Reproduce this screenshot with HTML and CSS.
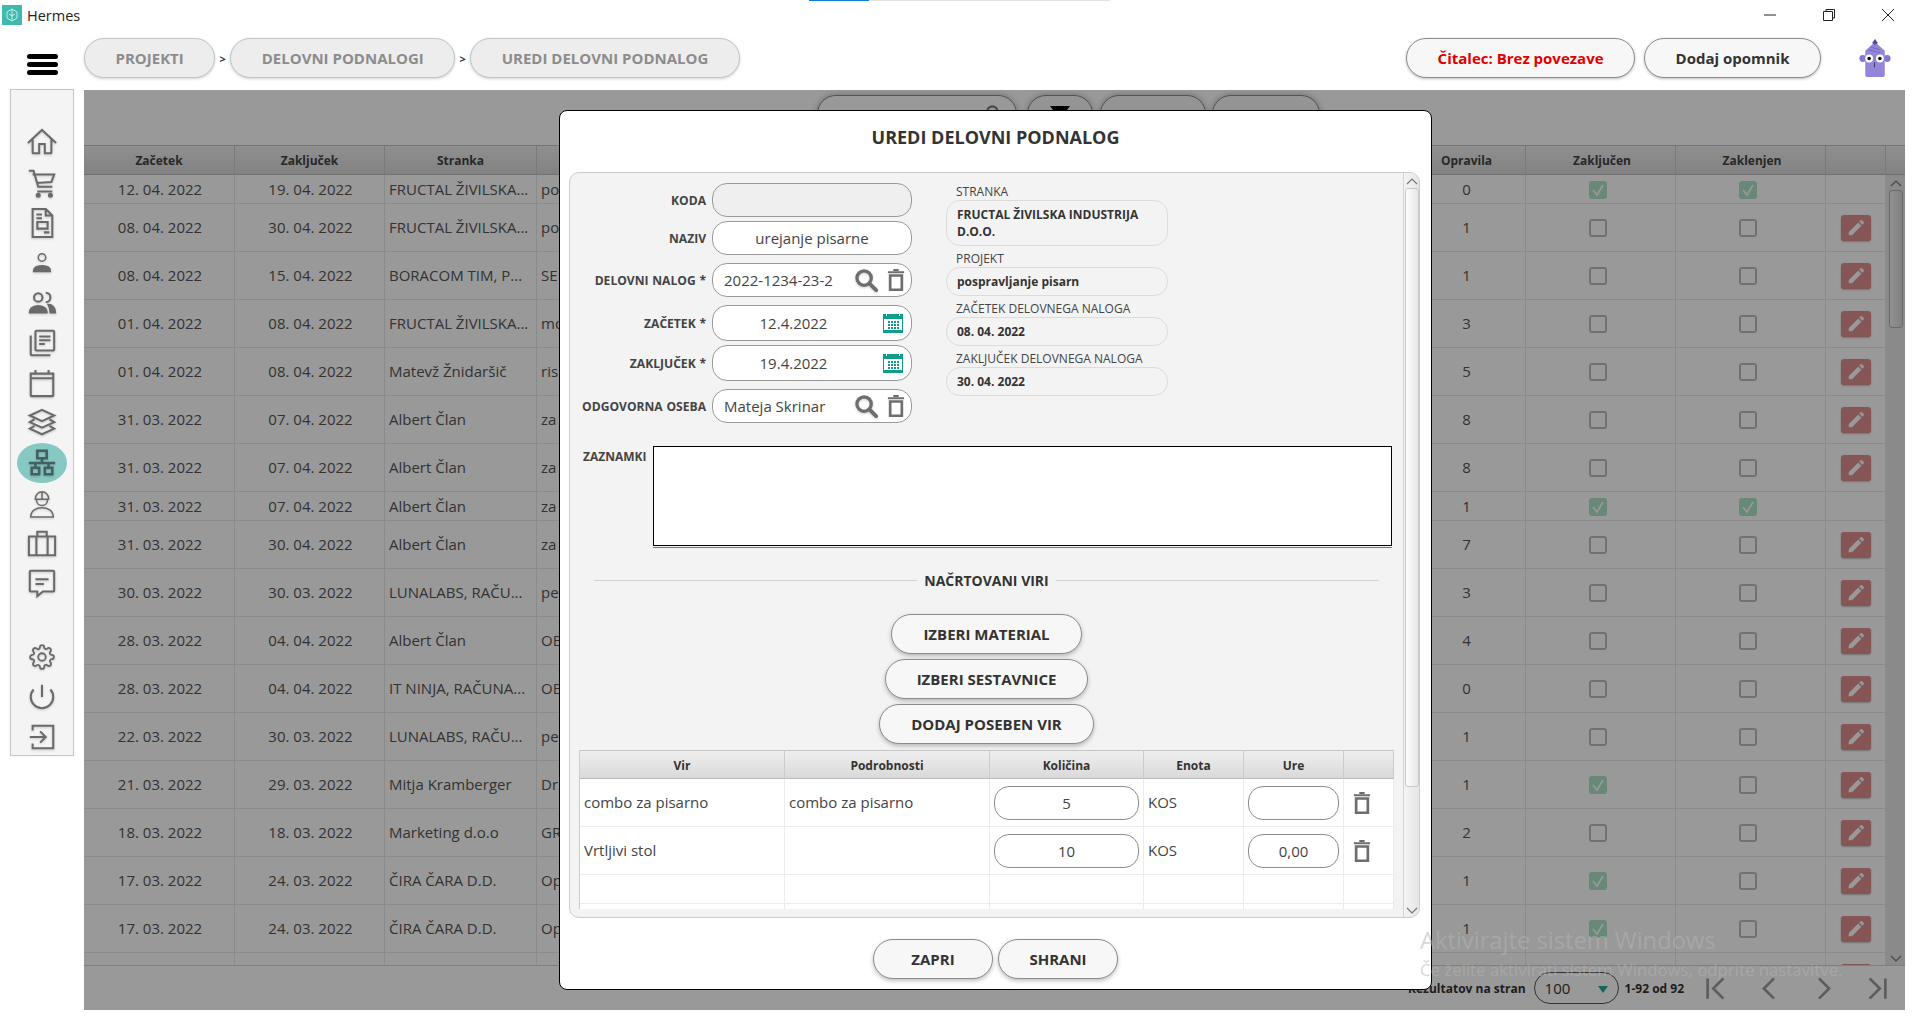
FILE: index.html
```html
<!DOCTYPE html>
<html lang="sl">
<head>
<meta charset="utf-8">
<title>Hermes</title>
<link rel="stylesheet" href="styles.css">
</head>
<body>
<svg class="sprite" aria-hidden="true">
  <symbol id="i-search" viewBox="0 0 24 24"><circle cx="9.5" cy="9.5" r="7.5" fill="none" stroke="currentColor" stroke-width="3.4"/><path d="M15 15l7 7" stroke="currentColor" stroke-width="4" stroke-linecap="round"/></symbol>
  <symbol id="i-trash" viewBox="0 0 20 24"><path d="M1 3.5h18M7 1h6" stroke="currentColor" stroke-width="2.2" fill="none"/><path d="M3.5 7h13v16h-13z" stroke="currentColor" stroke-width="3" fill="none"/></symbol>
  <symbol id="i-cal" viewBox="0 0 20 20"><path fill="currentColor" d="M0 1h3v2h1V1h12v2h1V1h3v19H0z"/><path fill="#fff" d="M1 6h18v13H1z"/><path fill="currentColor" d="M5 8h2v2H5zM8 8h2v2H8zM11 8h2v2h-2zM14 8h2v2h-2zM5 11h2v2H5zM8 11h2v2H8zM11 11h2v2h-2zM14 11h2v2h-2zM5 14h2v2H5zM8 14h2v2H8zM11 14h2v2h-2zM14 14h2v2h-2zM0 17h20v3H0z"/></symbol>
  <symbol id="i-pen" viewBox="0 0 20 20"><path fill="currentColor" d="M2 14.5L12.5 4l3.5 3.5L5.5 18H2zM13.6 2.9l1.3-1.3a1.4 1.4 0 0 1 2 0l1.5 1.5a1.4 1.4 0 0 1 0 2l-1.3 1.3z"/></symbol>
  <symbol id="i-up" viewBox="0 0 12 8"><path d="M1 7l5-5 5 5" fill="none" stroke="currentColor" stroke-width="1.2"/></symbol>
  <symbol id="i-down" viewBox="0 0 12 8"><path d="M1 1l5 5 5-5" fill="none" stroke="currentColor" stroke-width="1.2"/></symbol>
</svg>

<header class="titlebar">
  <svg class="app-icon" viewBox="0 0 20 20"><rect width="20" height="20" fill="#3fb9ae"/><path d="M5 7l5-3 5 3v6l-5 3-5-3zM10 4v12M7 9l3 2 3-2" fill="none" stroke="#d8f3f0" stroke-width=".9"/></svg>
  <span class="app-name">Hermes</span>
  <div class="loadbar"><span class="loadbar-fill"></span></div>
  <div class="winctl">
    <svg class="win-btn" viewBox="0 0 14 14"><path d="M1 7h12" stroke="#222" stroke-width="1"/></svg>
    <svg class="win-btn" viewBox="0 0 14 14"><path d="M1.5 3.5h9v9h-9zM4 3.5V1.5h8.5V10h-2" fill="none" stroke="#222" stroke-width="1"/></svg>
    <svg class="win-btn" viewBox="0 0 14 14"><path d="M1 1l12 12M13 1L1 13" stroke="#222" stroke-width="1"/></svg>
  </div>
</header>

<div class="topbar">
  <div class="burger"><span></span><span></span><span></span></div>
  <nav class="crumbs">
    <a class="crumb">PROJEKTI</a><span class="crumb-sep">&gt;</span>
    <a class="crumb">DELOVNI PODNALOGI</a><span class="crumb-sep">&gt;</span>
    <a class="crumb">UREDI DELOVNI PODNALOG</a>
  </nav>
  <div class="top-actions">
    <a class="top-btn top-btn-alert">Čitalec: Brez povezave</a>
    <a class="top-btn">Dodaj opomnik</a>
    <svg class="mascot" viewBox="0 0 32 40">
      <circle cx="3.5" cy="20" r="3.5" fill="#8677cf"/><circle cx="28.5" cy="20" r="3.5" fill="#8677cf"/>
      <path d="M6 12L16 3l10 9v25a2 2 0 0 1-2 2H8a2 2 0 0 1-2-2z" fill="#9385d8"/>
      <path d="M13 4l3-4 3 4-3 2z" fill="#5a4a9c"/>
      <path d="M9 11l12 3M11 8l10 3" stroke="#7668bd" stroke-width="1" fill="none"/>
      <circle cx="10" cy="20" r="4" fill="#fff"/><circle cx="21" cy="20" r="4" fill="#fff"/>
      <circle cx="10" cy="20" r="1.8" fill="#111"/><circle cx="21" cy="20" r="1.8" fill="#111"/>
      <path d="M15.500 24v5" stroke="#3c3270" stroke-width="1"/>
    </svg>
  </div>
</div>

<div class="workspace">
  <aside class="sidebar">
    <a class="nav-item"><svg class="nav-ic" viewBox="0 0 32 32"><path d="M1 16L16 2l15 14M6 12v14a1 1 0 0 0 1 1h6V17h6v10h6a1 1 0 0 0 1-1V12"/></svg></a>
    <a class="nav-item"><svg class="nav-ic" viewBox="0 0 32 32"><path d="M2 3h5l5 17h15M6 7h23l-3 8-16 1M11 25h16"/><circle class="dot" cx="12" cy="29" r="1.6"/><circle class="dot" cx="25" cy="29" r="1.6"/></svg></a>
    <a class="nav-item"><svg class="nav-ic" viewBox="0 0 32 32"><path d="M6 1h14l7 7v23H6zM20 1v7h7M10 7h6M10 11h6M11 15h11v7H11zM18 26h6"/></svg></a>
    <a class="nav-item"><svg class="nav-ic nav-ic-thin" viewBox="0 0 32 32"><circle cx="16" cy="10" r="4"/><path class="solid" d="M7 25c0-4 4-6 9-6s9 2 9 6z"/></svg></a>
    <a class="nav-item"><svg class="nav-ic" viewBox="0 0 32 32"><circle cx="12" cy="10" r="4.500"/><path d="M20 5a5 5 0 0 1 0 10"/><path class="solid" d="M3 26c0-9 18-9 18 0z"/><path class="solid" d="M23 18c4 0 7 3 7 8h-5c0-3-1-6-2-8z"/></svg></a>
    <a class="nav-item"><svg class="nav-ic" viewBox="0 0 32 32"><path d="M9 4a1 1 0 0 1 1-1h18a1 1 0 0 1 1 1v19a1 1 0 0 1-1 1H10a1 1 0 0 1-1-1zM4 8v20a1 1 0 0 0 1 1h20M13 9h12M13 13h12M13 17h6"/></svg></a>
    <a class="nav-item"><svg class="nav-ic" viewBox="0 0 32 32"><path d="M4 6h24v23a1 1 0 0 1-1 1H5a1 1 0 0 1-1-1zM4 11h24M9 2v5M23 2v5"/></svg></a>
    <a class="nav-item"><svg class="nav-ic" viewBox="0 0 32 32"><path d="M16 2l13 6-13 6L3 8zM8 12l-5 3 13 6 13-6-5-3M8 19l-5 3 13 6 13-6-5-3"/></svg></a>
    <a class="nav-item nav-item-active"><svg class="nav-ic" viewBox="0 0 32 32"><path d="M11 3h10v8H11zM16 11v5M2 16h28M9 16v5M23 16v5M5 21h8v7H5zM19 21h8v7h-8z"/></svg></a>
    <a class="nav-item"><svg class="nav-ic nav-ic-thin" viewBox="0 0 32 32"><path d="M9 11a7 7 0 0 1 14 0v1H9zM16 4v8M10 12c0 9 12 9 12 0M4 31c0-7 6-10 12-10s12 3 12 10z"/></svg></a>
    <a class="nav-item"><svg class="nav-ic" viewBox="0 0 32 32"><path d="M2 9h28v20H2zM11 9V4h10v5M10 9v20M22 9v20"/></svg></a>
    <a class="nav-item"><svg class="nav-ic" viewBox="0 0 32 32"><path d="M3 4a1 1 0 0 1 1-1h24a1 1 0 0 1 1 1v20a1 1 0 0 1-1 1H17l-6 5v-5H4a1 1 0 0 1-1-1zM9 12h14M9 17h9"/></svg></a>
    <a class="nav-item nav-item-gap"><svg class="nav-ic nav-ic-gear" viewBox="0 0 24 24"><circle cx="12" cy="12" r="3.500"/><path d="M19.400 15a1.650 1.650 0 0 0 .33 1.820l.06.06a2 2 0 0 1 0 2.830 2 2 0 0 1-2.830 0l-.06-.06a1.650 1.650 0 0 0-1.820-.33 1.650 1.650 0 0 0-1 1.510V21a2 2 0 0 1-2 2 2 2 0 0 1-2-2v-.09A1.650 1.650 0 0 0 9 19.400a1.650 1.650 0 0 0-1.820.33l-.06.06a2 2 0 0 1-2.830 0 2 2 0 0 1 0-2.830l.06-.06a1.650 1.650 0 0 0 .33-1.820 1.650 1.650 0 0 0-1.510-1H3a2 2 0 0 1-2-2 2 2 0 0 1 2-2h.09A1.650 1.650 0 0 0 4.600 9a1.650 1.650 0 0 0-.33-1.820l-.06-.06a2 2 0 0 1 0-2.830 2 2 0 0 1 2.830 0l.06.06a1.650 1.650 0 0 0 1.820.33H9a1.650 1.650 0 0 0 1-1.510V3a2 2 0 0 1 2-2 2 2 0 0 1 2 2v.09a1.650 1.650 0 0 0 1 1.510 1.650 1.650 0 0 0 1.820-.33l.06-.06a2 2 0 0 1 2.830 0 2 2 0 0 1 0 2.830l-.06.06a1.650 1.650 0 0 0-.33 1.820V9a1.650 1.650 0 0 0 1.510 1H21a2 2 0 0 1 2 2 2 2 0 0 1-2 2h-.09a1.650 1.650 0 0 0-1.510 1z"/></svg></a>
    <a class="nav-item"><svg class="nav-ic" viewBox="0 0 32 32"><path d="M7 8a12 12 0 1 0 18 0M16 3v13"/></svg></a>
    <a class="nav-item"><svg class="nav-ic" viewBox="0 0 32 32"><path d="M6 9V4h22v24H6v-5M3 16h16M14 10l6 6-6 6"/></svg></a>
  </aside>

  <main class="content">
    <div class="toolbar">
      <div class="tool tool-search"><svg class="tool-search-ic"><use href="#i-search"/></svg></div>
      <div class="tool tool-filter"><svg class="tool-funnel" viewBox="0 0 20 20"><path d="M0 0h20l-7 9v9l-6-3V9z"/></svg></div>
      <div class="tool tool-a"></div>
      <div class="tool tool-b"></div>
    </div>
    <div class="grid-area">
      <div class="grid-clip">
        <table class="grid">
          <colgroup><col class="w-start"><col class="w-end"><col class="w-client"><col class="w-name"><col class="w-tasks"><col class="w-flag"><col class="w-flag"><col class="w-edit"></colgroup>
          <thead><tr><th>Začetek</th><th>Zaključek</th><th>Stranka</th><th></th><th>Opravila</th><th class="th-flag">Zaključen</th><th class="th-flag">Zaklenjen</th><th></th></tr></thead>
          <tbody>
            <tr class="row-s"><td class="c">12. 04. 2022</td><td class="c">19. 04. 2022</td><td>FRUCTAL ŽIVILSKA...</td><td>po</td><td class="c">0</td><td class="c"><span class="cb cb-on"><svg viewBox="0 0 18 18"><path d="M4 9l4 5 6-10"/></svg></span></td><td class="c"><span class="cb cb-on"><svg viewBox="0 0 18 18"><path d="M4 9l4 5 6-10"/></svg></span></td><td></td></tr>
            <tr><td class="c">08. 04. 2022</td><td class="c">30. 04. 2022</td><td>FRUCTAL ŽIVILSKA...</td><td>po</td><td class="c">1</td><td class="c"><span class="cb"></span></td><td class="c"><span class="cb"></span></td><td class="c"><a class="edit"><svg><use href="#i-pen"/></svg></a></td></tr>
            <tr><td class="c">08. 04. 2022</td><td class="c">15. 04. 2022</td><td>BORACOM TIM, P...</td><td>SE</td><td class="c">1</td><td class="c"><span class="cb"></span></td><td class="c"><span class="cb"></span></td><td class="c"><a class="edit"><svg><use href="#i-pen"/></svg></a></td></tr>
            <tr><td class="c">01. 04. 2022</td><td class="c">08. 04. 2022</td><td>FRUCTAL ŽIVILSKA...</td><td>mo</td><td class="c">3</td><td class="c"><span class="cb"></span></td><td class="c"><span class="cb"></span></td><td class="c"><a class="edit"><svg><use href="#i-pen"/></svg></a></td></tr>
            <tr><td class="c">01. 04. 2022</td><td class="c">08. 04. 2022</td><td>Matevž Žnidaršič</td><td>ris</td><td class="c">5</td><td class="c"><span class="cb"></span></td><td class="c"><span class="cb"></span></td><td class="c"><a class="edit"><svg><use href="#i-pen"/></svg></a></td></tr>
            <tr><td class="c">31. 03. 2022</td><td class="c">07. 04. 2022</td><td>Albert Član</td><td>za</td><td class="c">8</td><td class="c"><span class="cb"></span></td><td class="c"><span class="cb"></span></td><td class="c"><a class="edit"><svg><use href="#i-pen"/></svg></a></td></tr>
            <tr><td class="c">31. 03. 2022</td><td class="c">07. 04. 2022</td><td>Albert Član</td><td>za</td><td class="c">8</td><td class="c"><span class="cb"></span></td><td class="c"><span class="cb"></span></td><td class="c"><a class="edit"><svg><use href="#i-pen"/></svg></a></td></tr>
            <tr class="row-s"><td class="c">31. 03. 2022</td><td class="c">07. 04. 2022</td><td>Albert Član</td><td>za</td><td class="c">1</td><td class="c"><span class="cb cb-on"><svg viewBox="0 0 18 18"><path d="M4 9l4 5 6-10"/></svg></span></td><td class="c"><span class="cb cb-on"><svg viewBox="0 0 18 18"><path d="M4 9l4 5 6-10"/></svg></span></td><td></td></tr>
            <tr><td class="c">31. 03. 2022</td><td class="c">30. 04. 2022</td><td>Albert Član</td><td>za</td><td class="c">7</td><td class="c"><span class="cb"></span></td><td class="c"><span class="cb"></span></td><td class="c"><a class="edit"><svg><use href="#i-pen"/></svg></a></td></tr>
            <tr><td class="c">30. 03. 2022</td><td class="c">30. 03. 2022</td><td>LUNALABS, RAČU...</td><td>pe</td><td class="c">3</td><td class="c"><span class="cb"></span></td><td class="c"><span class="cb"></span></td><td class="c"><a class="edit"><svg><use href="#i-pen"/></svg></a></td></tr>
            <tr><td class="c">28. 03. 2022</td><td class="c">04. 04. 2022</td><td>Albert Član</td><td>OB</td><td class="c">4</td><td class="c"><span class="cb"></span></td><td class="c"><span class="cb"></span></td><td class="c"><a class="edit"><svg><use href="#i-pen"/></svg></a></td></tr>
            <tr><td class="c">28. 03. 2022</td><td class="c">04. 04. 2022</td><td>IT NINJA, RAČUNA...</td><td>OB</td><td class="c">0</td><td class="c"><span class="cb"></span></td><td class="c"><span class="cb"></span></td><td class="c"><a class="edit"><svg><use href="#i-pen"/></svg></a></td></tr>
            <tr><td class="c">22. 03. 2022</td><td class="c">30. 03. 2022</td><td>LUNALABS, RAČU...</td><td>pe</td><td class="c">1</td><td class="c"><span class="cb"></span></td><td class="c"><span class="cb"></span></td><td class="c"><a class="edit"><svg><use href="#i-pen"/></svg></a></td></tr>
            <tr><td class="c">21. 03. 2022</td><td class="c">29. 03. 2022</td><td>Mitja Kramberger</td><td>Dr</td><td class="c">1</td><td class="c"><span class="cb cb-on"><svg viewBox="0 0 18 18"><path d="M4 9l4 5 6-10"/></svg></span></td><td class="c"><span class="cb"></span></td><td class="c"><a class="edit"><svg><use href="#i-pen"/></svg></a></td></tr>
            <tr><td class="c">18. 03. 2022</td><td class="c">18. 03. 2022</td><td>Marketing d.o.o</td><td>GR</td><td class="c">2</td><td class="c"><span class="cb"></span></td><td class="c"><span class="cb"></span></td><td class="c"><a class="edit"><svg><use href="#i-pen"/></svg></a></td></tr>
            <tr><td class="c">17. 03. 2022</td><td class="c">24. 03. 2022</td><td>ČIRA ČARA D.D.</td><td>Op</td><td class="c">1</td><td class="c"><span class="cb cb-on"><svg viewBox="0 0 18 18"><path d="M4 9l4 5 6-10"/></svg></span></td><td class="c"><span class="cb"></span></td><td class="c"><a class="edit"><svg><use href="#i-pen"/></svg></a></td></tr>
            <tr><td class="c">17. 03. 2022</td><td class="c">24. 03. 2022</td><td>ČIRA ČARA D.D.</td><td>Op</td><td class="c">1</td><td class="c"><span class="cb cb-on"><svg viewBox="0 0 18 18"><path d="M4 9l4 5 6-10"/></svg></span></td><td class="c"><span class="cb"></span></td><td class="c"><a class="edit"><svg><use href="#i-pen"/></svg></a></td></tr>
            <tr><td></td><td></td><td></td><td></td><td></td><td></td><td></td><td class="c"><a class="edit"><svg><use href="#i-pen"/></svg></a></td></tr>
          </tbody>
        </table>
      </div>
      <div class="vscroll">
        <div class="vscroll-head"></div>
        <div class="vscroll-track">
          <svg class="arrow"><use href="#i-up"/></svg>
          <div class="vscroll-thumb"></div>
          <svg class="arrow arrow-end"><use href="#i-down"/></svg>
        </div>
      </div>
    </div>
    <footer class="pager">
      <span class="pager-text">Rezultatov na stran</span>
      <div class="pager-select"><span>100</span><i class="pager-caret"></i></div>
      <span class="pager-text pager-count">1-92 od 92</span>
      <svg class="pager-ic" viewBox="0 0 24 24"><path d="M5 3v18M19 3l-9 9 9 9"/></svg>
      <svg class="pager-ic" viewBox="0 0 24 24"><path d="M16 3l-9 9 9 9"/></svg>
      <svg class="pager-ic" viewBox="0 0 24 24"><path d="M8 3l9 9-9 9"/></svg>
      <svg class="pager-ic" viewBox="0 0 24 24"><path d="M19 3v18M5 3l9 9-9 9"/></svg>
    </footer>

    <div class="dim">
      <section class="modal">
        <h1 class="modal-title">UREDI DELOVNI PODNALOG</h1>
        <div class="panel">
          <div class="panel-body">
            <div class="form-top">
              <div class="form-left">
                <div class="frow"><label class="flabel">KODA</label><div class="field field-off"></div></div>
                <div class="frow frow-near"><label class="flabel">NAZIV</label><div class="field field-mid">urejanje pisarne</div></div>
                <div class="frow"><label class="flabel">DELOVNI NALOG *</label><div class="field"><span class="field-text">2022-1234-23-2</span><svg class="ic-search"><use href="#i-search"/></svg><svg class="ic-trash"><use href="#i-trash"/></svg></div></div>
                <div class="frow"><label class="flabel">ZAČETEK *</label><div class="field field-date"><span class="field-text">12.4.2022</span><svg class="ic-cal"><use href="#i-cal"/></svg></div></div>
                <div class="frow frow-near"><label class="flabel">ZAKLJUČEK *</label><div class="field field-date"><span class="field-text">19.4.2022</span><svg class="ic-cal"><use href="#i-cal"/></svg></div></div>
                <div class="frow"><label class="flabel">ODGOVORNA OSEBA</label><div class="field"><span class="field-text">Mateja Skrinar</span><svg class="ic-search"><use href="#i-search"/></svg><svg class="ic-trash"><use href="#i-trash"/></svg></div></div>
              </div>
              <div class="form-right">
                <div class="info-label">STRANKA</div><div class="info-box">FRUCTAL ŽIVILSKA INDUSTRIJA D.O.O.</div>
                <div class="info-label">PROJEKT</div><div class="info-box">pospravljanje pisarn</div>
                <div class="info-label">ZAČETEK DELOVNEGA NALOGA</div><div class="info-box">08. 04. 2022</div>
                <div class="info-label">ZAKLJUČEK DELOVNEGA NALOGA</div><div class="info-box">30. 04. 2022</div>
              </div>
            </div>
            <div class="notes"><label class="notes-label">ZAZNAMKI</label><div class="notes-area"></div></div>
            <div class="divider"><span>NAČRTOVANI VIRI</span></div>
            <div class="res-actions">
              <a class="pill">IZBERI MATERIAL</a>
              <a class="pill">IZBERI SESTAVNICE</a>
              <a class="pill">DODAJ POSEBEN VIR</a>
            </div>
            <table class="res">
              <colgroup><col class="r-src"><col class="r-det"><col class="r-qty"><col class="r-unit"><col class="r-hrs"><col class="r-del"></colgroup>
              <thead><tr><th>Vir</th><th>Podrobnosti</th><th>Količina</th><th>Enota</th><th>Ure</th><th></th></tr></thead>
              <tbody>
                <tr><td>combo za pisarno</td><td>combo za pisarno</td><td><div class="cell-input">5</div></td><td>KOS</td><td><div class="cell-input"></div></td><td><svg class="ic-trash ic-trash-row"><use href="#i-trash"/></svg></td></tr>
                <tr><td>Vrtljivi stol</td><td></td><td><div class="cell-input">10</div></td><td>KOS</td><td><div class="cell-input">0,00</div></td><td><svg class="ic-trash ic-trash-row"><use href="#i-trash"/></svg></td></tr>
                <tr class="row-s"><td></td><td></td><td></td><td></td><td></td><td></td></tr>
                <tr class="row-s"><td></td><td></td><td></td><td></td><td></td><td></td></tr>
              </tbody>
            </table>
          </div>
          <div class="panel-scroll">
            <svg class="arrow"><use href="#i-up"/></svg>
            <div class="panel-thumb"></div>
            <svg class="arrow arrow-end"><use href="#i-down"/></svg>
          </div>
        </div>
        <div class="modal-foot">
          <a class="pill pill-foot">ZAPRI</a>
          <a class="pill pill-foot">SHRANI</a>
        </div>
      </section>
    </div>
  </main>
</div>

<div class="watermark">
  <div class="wm-big">Aktivirajte sistem Windows</div>
  <div class="wm-small">Če želite aktivirati sistem Windows, odprite nastavitve.</div>
</div>
</body>
</html>
```
FILE: styles.css
```css
* { box-sizing: border-box; }
html, body { margin: 0; padding: 0; }
body {
  width: 1920px; height: 1030px; overflow: hidden; position: relative;
  background: #fff; color: #444;
  font-family: "Open Sans", "Noto Sans", sans-serif; font-size: 15px;
}
.sprite { display: none; }

/* title bar */
.titlebar { height: 30px; display: flex; align-items: center; position: relative; }
.app-icon { width: 20px; height: 20px; margin-left: 2px; }
.app-name { margin-left: 5px; font-size: 14.5px; color: #222; }
.loadbar { position: absolute; left: 809px; top: 0; width: 301px; height: 1px; background: #e2e2e2; }
.loadbar-fill { display: block; width: 60px; height: 1px; background: #0a7fe0; }
.winctl { margin-left: auto; display: flex; gap: 45px; margin-right: 25px; }
.win-btn { width: 14px; height: 14px; }

/* top bar */
.topbar { height: 59px; display: flex; align-items: flex-start; padding-top: 8px; }
.burger { width: 31px; margin: 16px 0 0 27px; display: flex; flex-direction: column; gap: 3.5px; }
.burger span { display: block; height: 4.5px; background: #000; border-radius: 3px; }
.crumbs { display: flex; align-items: center; margin-left: 26px; }
.crumb {
  height: 40px; padding: 0 30.5px; display: flex; align-items: center;
  background: #ededed; border: 1px solid #c4c4c4; border-radius: 20px;
  color: #8c8c8c; font-weight: 700; font-size: 15px;
  box-shadow: 0 1px 3px rgba(0,0,0,.18);
}
.crumb-sep { width: 15px; text-align: center; font-size: 11px; font-weight: 700; color: #333; }
.top-actions { margin-left: auto; display: flex; align-items: flex-start; gap: 9px; margin-right: 29px; }
.top-btn {
  height: 40px; padding: 0 30.5px; display: flex; align-items: center;
  background: #f7f7f7; border: 1px solid #8c8c8c; border-radius: 20px;
  color: #333; font-weight: 700; font-size: 15px;
  box-shadow: 0 1px 3px rgba(0,0,0,.25);
}
.top-btn-alert { color: #e00000; }
.mascot { width: 32px; height: 39px; margin: 1px 0 0 29px; }

/* workspace */
.workspace { display: flex; height: 921px; align-items: flex-start; padding-left: 10px; }
.sidebar {
  width: 64px; height: 667px; background: #f4f4f4; border: 1px solid #c6c6c6;
  padding-top: 33px; display: flex; flex-direction: column; align-items: center;
  box-shadow: 0 0 3px rgba(0,0,0,.06);
}
.nav-item { width: 50px; height: 40px; display: flex; align-items: center; justify-content: center; flex: none; }
.nav-item-active { background: #87c8c2; border-radius: 50%; }
.nav-item-active .nav-ic { stroke: #41605f; stroke-width: 2.7; }
.nav-item-gap { margin-top: 34px; }
.nav-ic {
  width: 30px; height: 30px; fill: none; stroke: #6a6a6a; stroke-width: 2.2;
  filter: drop-shadow(0 1px 1px rgba(0,0,0,.18));
}
.nav-ic .solid { fill: #6a6a6a; }
.nav-ic .dot { fill: #6a6a6a; }
.nav-ic-thin { stroke-width: 1.6; }
.nav-ic-gear { width: 26px; height: 26px; stroke-width: 1.7; }

.content { width: 1821px; height: 920px; margin-left: 10px; margin-top: 1px; background: #fff; position: relative; display: flex; flex-direction: column; }
.toolbar { height: 55px; flex: none; display: flex; align-items: flex-start; padding: 5px 0 0 733px; }
.tool { height: 38px; flex: none; background: #f7f7f7; border: 1px solid #8c8c8c; border-radius: 19px; box-shadow: 0 0 6px rgba(0,0,0,.3); display: flex; justify-content: flex-end; }
.tool-search { width: 200px; background: #fff; }
.tool-search-ic { width: 16px; height: 16px; margin: 9px 14px 0 0; color: #777; }
.tool-filter { width: 66px; margin-left: 10px; justify-content: center; }
.tool-funnel { width: 20px; height: 20px; margin-top: 10px; fill: #000; }
.tool-a { width: 106px; margin-left: 7px; }
.tool-b { width: 108px; margin-left: 6px; }

.grid-area { height: 820px; flex: none; display: flex; }
.grid-clip { width: 1802px; overflow: hidden; }
.grid, .res { border-collapse: separate; border-spacing: 0; table-layout: fixed; }
.grid { width: 1802px; color: #555; }
.w-start { width: 151px; } .w-end { width: 150px; } .w-client { width: 152px; } .w-name { width: 871px; }
.w-tasks { width: 118px; } .w-flag { width: 150px; } .w-edit { width: 60px; }
.grid th, .res th {
  font-size: 12px; font-weight: 700; color: #333; padding: 1px 0 0;
  background: linear-gradient(#efefef, #d9d9d9);
  border-right: 1px solid #ccc; border-bottom: 1px solid #bbb; border-top: 1px solid #c4c4c4;
}
.grid th { height: 30px; color: #444; }
.grid th.th-flag { padding-left: 3px; }
.grid td { height: 48px; padding: 0 0 0 4px; font-size: 15px; border-bottom: 1px solid #e8e8e8; border-right: 1px solid #e8e8e8; white-space: nowrap; overflow: hidden; }
.grid .row-s td { height: 29px; }
.grid td.c { text-align: center; padding: 0; }
.grid td.c:nth-child(-n+2) { padding-left: 2px; }
.grid tr:not(.row-s) td:not(:has(.cb, .edit)) { padding-bottom: 2px; }
.cb { display: inline-block; width: 18px; height: 18px; margin: -2px 6px 0 0; border: 2px solid #bdbdbd; border-radius: 3px; vertical-align: middle; }
.cb-on { background: #aee4c8; border: none; }
.cb-on svg { display: block; width: 18px; height: 18px; fill: none; stroke: #fff; stroke-width: 1.6; }
.edit { display: inline-flex; width: 30px; height: 26px; align-items: center; justify-content: center; background: #e08f8f; border-radius: 3px; vertical-align: middle; color: #fff; box-shadow: 0 1px 2px rgba(0,0,0,.25); }
.edit svg { width: 18px; height: 18px; }

.vscroll { width: 19px; flex: none; display: flex; flex-direction: column; }
.vscroll-head { height: 30px; flex: none; background: linear-gradient(#efefef, #d9d9d9); border-bottom: 1px solid #bbb; border-top: 1px solid #c4c4c4; }
.vscroll-track { flex: 1; background: #e6e6e6; display: flex; flex-direction: column; align-items: center; }
.arrow { width: 12px; height: 8px; margin-top: 4px; color: #777; flex: none; }
.arrow-end { margin-top: auto; margin-bottom: 2px; }
.vscroll-thumb { width: 14px; height: 138px; margin-top: 3px; border: 1px solid #b0b0b0; border-radius: 3px; background: linear-gradient(90deg, #f2f2f2, #d8d8d8); }

.pager { flex: 1; display: flex; align-items: center; justify-content: flex-end; border-top: 1px solid #d4d4d4; }
.pager-text { font-size: 12px; font-weight: 700; color: #333; }
.pager-select { width: 85px; height: 32px; margin: 0 6px 0 8px; border: 1px solid #555; border-radius: 16px; padding-left: 10px; display: flex; align-items: center; font-size: 15px; color: #333; position: relative; }
.pager-caret { position: absolute; right: 10px; top: 13px; border: 5px solid transparent; border-top: 7px solid #2aa898; border-bottom: 0; }
.pager-count { margin-right: 18px; }
.pager-ic { width: 27px; height: 27px; margin-left: 27px; fill: none; stroke: #9c9c9c; stroke-width: 2.4; flex: none; }
.pager-ic:first-of-type { margin-left: 0; }
.pager-ic + .pager-ic:last-child { margin-right: 14px; }

/* overlay & modal */
.dim { position: absolute; inset: 0; background: rgba(0,0,0,.4); }
.modal {
  position: absolute; left: 475px; top: 20px; width: 873px; height: 880px;
  background: #fff; border: 1px solid #000; border-radius: 8px;
  display: flex; flex-direction: column;
}
.modal-title { margin: 0; height: 61px; padding-top: 9px; line-height: 34px; font-size: 18px; font-weight: 700; color: #333; text-align: center; flex: none; }
.panel { width: 851px; height: 746px; margin-left: 9px; flex: none; background: #f3f3f3; border: 1px solid #ccc; border-radius: 10px; display: flex; overflow: hidden; }
.panel-body { width: 833px; height: 736px; overflow: hidden; flex: none; }
.panel-scroll { width: 17px; flex: none; background: linear-gradient(90deg, #f4f4f4, #e4e4e4); border-left: 1px solid #d4d4d4; display: flex; flex-direction: column; align-items: center; }
.panel-thumb { width: 14px; height: 599px; margin-top: 3px; border: 1px solid #c8c8c8; border-radius: 3px; background: linear-gradient(90deg, #fdfdfd, #e6e6e6); }

.form-top { display: flex; padding-top: 10px; }
.form-left { width: 342px; flex: none; display: flex; flex-direction: column; }
.frow { display: flex; align-items: center; margin-top: 8px; }
.frow:first-child { margin-top: 0; }
.frow-near { margin-top: 4px; }
.flabel { width: 136px; margin-right: 6px; text-align: right; font-size: 12.1px; word-spacing: .6px; font-weight: 700; color: #444; flex: none; white-space: nowrap; }
.field { width: 200px; height: 34px; display: flex; align-items: center; background: #fff; border: 1px solid #9a9a9a; border-radius: 15px; font-size: 15px; color: #444; flex: none; }
.field-off { background: #efefef; }
.field-mid { justify-content: center; }
.field-text { margin-left: 11px; flex: 1; white-space: nowrap; }
.field-date { height: 36px; }
.field-date .field-text { margin-left: 0; text-align: center; flex: none; width: 161px; }
.ic-search { width: 23px; height: 23px; color: #6e6e6e; flex: none; filter: drop-shadow(0 1px 1px rgba(0,0,0,.2)); }
.ic-trash { width: 18px; height: 22px; margin: 0 6px 0 9px; color: #6e6e6e; flex: none; }
.ic-cal { width: 20px; height: 20px; margin-left: 9px; color: #0f9d8a; flex: none; }

.form-right { width: 222px; margin-left: 34px; padding-top: 2px; flex: none; }
.info-label { height: 15px; line-height: 13px; font-size: 12px; color: #444; padding-left: 10px; white-space: nowrap; margin-top: 6px; }
.info-label:first-child { margin-top: 0; }
.info-box { min-height: 29px; padding: 5px 12px 5px 10px; border: 1px solid #dcdcdc; border-radius: 14px; font-size: 12px; line-height: 17px; font-weight: 700; color: #333; }

.notes { display: flex; margin-top: 23px; }
.notes-label { width: 83px; padding: 2px 0 0 13px; font-size: 12px; font-weight: 700; color: #444; flex: none; }
.notes-area { width: 739px; height: 100px; background: #fff; border: 1px solid #000; box-shadow: 0 1px 0 #f3f3f3, 0 2px 0 #777; }

.divider { display: flex; align-items: center; gap: 7px; width: 785px; height: 20px; margin: 24px 0 0 24px; font-size: 14px; font-weight: 700; color: #333; }
.divider::before, .divider::after { content: ""; flex: 1; height: 1px; background: #d2d2d2; }

.res-actions { display: flex; flex-direction: column; align-items: center; gap: 5px; margin-top: 24px; }
.pill {
  height: 40px; padding: 0 31px; display: flex; align-items: center; justify-content: center;
  background: #f7f7f7; border: 1px solid #8c8c8c; border-radius: 20px;
  font-size: 15px; font-weight: 700; color: #333;
  box-shadow: 0 2px 4px rgba(0,0,0,.25);
}
.res { width: 814px; margin: 6px 0 0 9px; background: #fff; color: #444; border-left: 1px solid #ccc; }
.r-src { width: 205px; } .r-det { width: 205px; } .r-qty { width: 154px; } .r-unit { width: 100px; } .r-hrs { width: 100px; } .r-del { width: 50px; }
.res th { height: 29px; }
.res td { height: 48px; padding: 0 4px; font-size: 15px; border-bottom: 1px solid #ececec; border-right: 1px solid #ececec; white-space: nowrap; }
.res td:not(:has(.cell-input, svg)) { padding-bottom: 2px; }
.res .row-s td { height: 29px; }
.cell-input { height: 34px; line-height: 32px; text-align: center; background: #fff; border: 1px solid #8c8c8c; border-radius: 15px; color: #444; }
.ic-trash-row { display: block; margin: 0 0 0 5px; }

.modal-foot { display: flex; justify-content: center; gap: 5px; margin-top: 21px; }
.pill-foot { width: 120px; padding: 0; }

/* windows activation watermark */
.watermark { position: absolute; left: 1420px; top: 924px; pointer-events: none; white-space: nowrap; color: rgba(180,180,180,.55); }
.wm-big { font-size: 23.700px; line-height: 32px; }
.wm-small { font-size: 16.800px; line-height: 22px; margin-top: 3px; }
```
